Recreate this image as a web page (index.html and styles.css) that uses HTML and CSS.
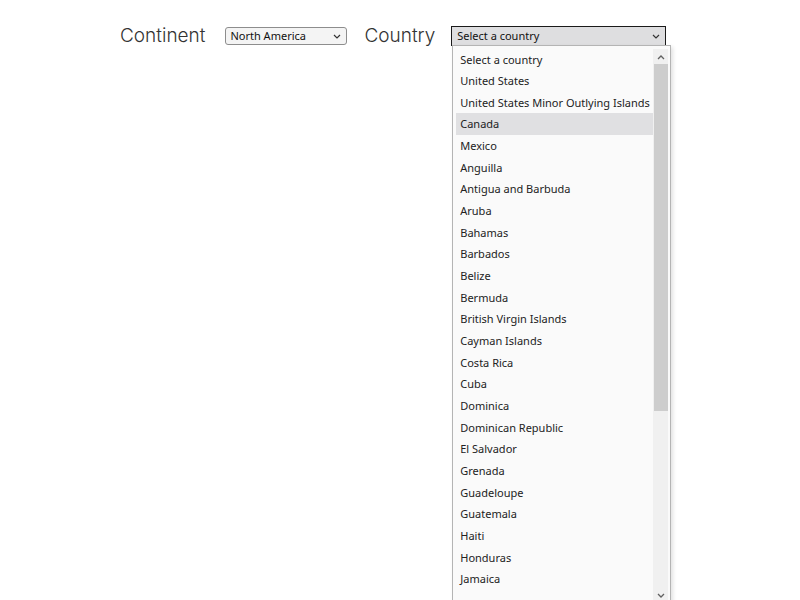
FILE: index.html
```html
<!DOCTYPE html>
<html lang="en">
<head>
  <meta charset="UTF-8" />
  <meta name="viewport" content="width=device-width, initial-scale=1.0"/>
  <title>Country Picker</title>
  <link rel="stylesheet" href="styles.css">
</head>
<body>
  <div class="picker">
    <label class="lbl first" for="continent">Continent</label>
    <div class="sel-wrap small">
      <select id="continent" class="sel">
        <option>North America</option>
      </select>
      <svg class="chev" width="8" height="5" viewBox="0 0 8 5"><path d="M1 1 L4 4 L7 1" fill="none" stroke="#333" stroke-width="1.2"/></svg>
    </div>
    <label class="lbl" for="country">Country</label>
    <div class="sel-wrap big">
      <select id="country" class="sel open">
        <option>Select a country</option>
      </select>
      <svg class="chev" width="8" height="5" viewBox="0 0 8 5"><path d="M1 1 L4 4 L7 1" fill="none" stroke="#333" stroke-width="1.2"/></svg>

      <div class="dropdown">
        <ul class="options">
          <li>Select a country</li>
          <li>United States</li>
          <li>United States Minor Outlying Islands</li>
          <li class="hover">Canada</li>
          <li>Mexico</li>
          <li>Anguilla</li>
          <li>Antigua and Barbuda</li>
          <li>Aruba</li>
          <li>Bahamas</li>
          <li>Barbados</li>
          <li>Belize</li>
          <li>Bermuda</li>
          <li>British Virgin Islands</li>
          <li>Cayman Islands</li>
          <li>Costa Rica</li>
          <li>Cuba</li>
          <li>Dominica</li>
          <li>Dominican Republic</li>
          <li>El Salvador</li>
          <li>Grenada</li>
          <li>Guadeloupe</li>
          <li>Guatemala</li>
          <li>Haiti</li>
          <li>Honduras</li>
          <li>Jamaica</li>
        </ul>
        <div class="scrollbar">
          <svg class="arrow" width="8" height="5" viewBox="0 0 8 5"><path d="M1 4 L4 1 L7 4" fill="none" stroke="#606060" stroke-width="1.3"/></svg>
          <div class="thumb"></div>
          <div class="track"></div>
          <svg class="arrow" width="8" height="5" viewBox="0 0 8 5"><path d="M1 1 L4 4 L7 1" fill="none" stroke="#606060" stroke-width="1.3"/></svg>
        </div>
      </div>
    </div>
  </div>
</body>
</html>
```

FILE: styles.css
```css
* {
  margin: 0;
  padding: 0;
  box-sizing: border-box;
}

body {
  background: #fff;
  width: 800px;
  height: 600px;
  overflow: hidden;
  font-family: "Noto Sans", sans-serif;
}

.picker {
  display: flex;
  align-items: center;
  padding: 24px 0 0 120px;
}

.lbl {
  font-family: Inter, sans-serif;
  font-weight: 300;
  font-size: 19px;
  color: #333;
  margin-right: 16px;
}

.lbl.first {
  margin-right: 20px;
}

.sel-wrap {
  position: relative;
  margin-right: 17px;
}

.sel {
  appearance: none;
  -webkit-appearance: none;
  display: block;
  font-family: "Noto Sans", sans-serif;
  font-size: 11px;
  color: #111;
  outline: none;
}

.small .sel {
  width: 122px;
  height: 18px;
  padding: 0 4px;
  border: 1px solid #8d8d8d;
  border-radius: 3px;
  background: #f4f4f4;
  line-height: 16px;
}

.big .sel {
  width: 215px;
  height: 20px;
  padding: 0 5px;
  border: 1px solid #1a1a1a;
  background: #dedee0;
  line-height: 18px;
}

.chev {
  position: absolute;
  right: 6px;
  top: 7px;
}

.big .chev {
  right: 6px;
  top: 8px;
}

.dropdown {
  position: absolute;
  left: 1px;
  top: 19px;
  width: 219px;
  height: 600px;
  display: flex;
  background: #fafafa;
  border: 1px solid #b4b4b4;
  box-shadow: 2px 2px 4px rgba(0, 0, 0, 0.12);
  padding: 3px 2px 0 3px;
}

.options {
  list-style: none;
  flex: 1;
  min-width: 0;
  overflow: hidden;
}

.options li {
  height: 21.67px;
  line-height: 21.67px;
  padding-left: 4px;
  font-size: 11px;
  color: #222;
  white-space: nowrap;
}

.options li.hover {
  background: #e0e0e2;
}

.scrollbar {
  width: 15px;
  display: flex;
  flex-direction: column;
  align-items: center;
  background: #f0f0f0;
  height: 553px;
}

.arrow {
  margin: 6px 0 4px;
  flex-shrink: 0;
}

.thumb {
  width: 14px;
  height: 347px;
  background: #cdcdcd;
  flex-shrink: 0;
}

.track {
  flex: 1;
}
```
